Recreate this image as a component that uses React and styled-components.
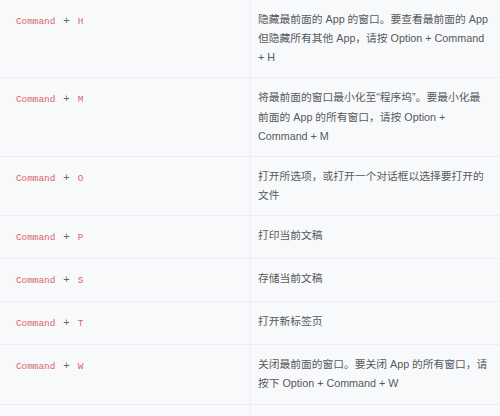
import React from 'react';
import styled, { createGlobalStyle } from 'styled-components';

const GlobalStyle = createGlobalStyle`
    html, body {
        margin: 0;
        padding: 0;
        background: #f8f9fb;
    }
    body {
        width: 500px;
        height: 416px;
        overflow: hidden;
        font-family: "Liberation Sans", "Noto Sans CJK SC", sans-serif;
    }
`

const Table = styled.div`
    display: flex;
    flex-direction: column;
    margin-top: -1px;
    background: #f8f9fb;
`

const Row = styled.div`
    display: grid;
    grid-template-columns: 251px 1fr;
    align-items: stretch;
    border-top: 1px solid #eceef2;
`

const KeyCell = styled.div`
    padding: 10px 8px 10px 16px;
    line-height: 21px;
    font-size: 11px;
    color: #666a70;
    border-right: 1px solid #f0f1f4;
    white-space: nowrap;
`

const Code = styled.code`
    font-family: "Liberation Mono", "DejaVu Sans Mono", monospace;
    font-size: 9.35px;
    color: #d9646a;
    padding: 0 3px;
    &:first-child {
        padding-left: 0;
    }
`

const Plus = styled.span`
    margin: 0 2px;
`

const DescCell = styled.div`
    padding: 10px 10px 10px 7px;
    font-size: 10.75px;
    line-height: 19.15px;
    color: #56595e;
`

const shortcuts = [
    { keys: ['Command', 'H'], desc: '隐藏最前面的 App 的窗口。要查看最前面的 App 但隐藏所有其他 App，请按 Option + Command + H' },
    { keys: ['Command', 'M'], desc: '将最前面的窗口最小化至“程序坞”。要最小化最前面的 App 的所有窗口，请按 Option + Command + M' },
    { keys: ['Command', 'O'], desc: '打开所选项，或打开一个对话框以选择要打开的文件' },
    { keys: ['Command', 'P'], desc: '打印当前文稿' },
    { keys: ['Command', 'S'], desc: '存储当前文稿' },
    { keys: ['Command', 'T'], desc: '打开新标签页' },
    { keys: ['Command', 'W'], desc: '关闭最前面的窗口。要关闭 App 的所有窗口，请按下 Option + Command + W' },
    { keys: ['Option', 'Command', 'Esc'], desc: '强制退出 App' },
]

const App = () => {
    return (
        <>
            <GlobalStyle />
            <Table>
                {shortcuts.map((item) => (
                    <Row key={item.keys.join('-')}>
                        <KeyCell>
                            {item.keys.map((k, i) => (
                                <React.Fragment key={k}>
                                    {i > 0 && <Plus> + </Plus>}
                                    <Code>{k}</Code>
                                </React.Fragment>
                            ))}
                        </KeyCell>
                        <DescCell>{item.desc}</DescCell>
                    </Row>
                ))}
            </Table>
        </>
    );
};

export default App;
